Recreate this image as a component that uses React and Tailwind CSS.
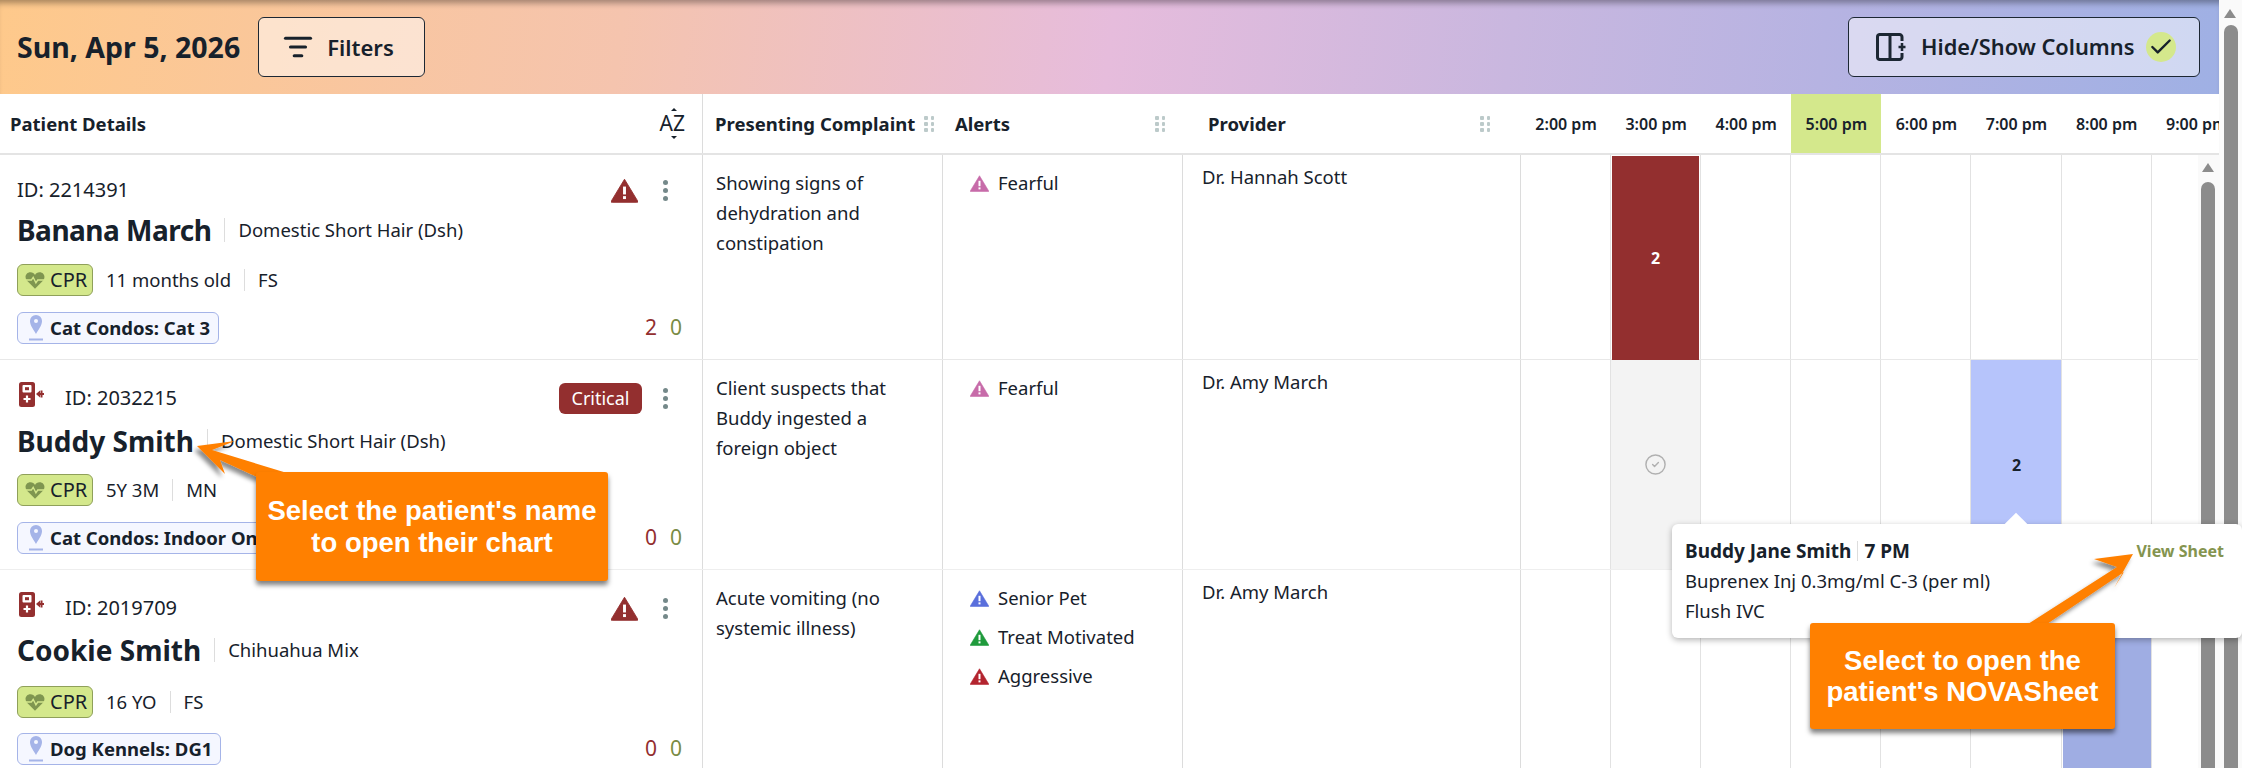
import React from 'react';
import { ListFilter, Check, CircleCheck } from 'lucide-react';

const times = ['2:00 pm', '3:00 pm', '4:00 pm', '5:00 pm', '6:00 pm', '7:00 pm', '8:00 pm', '9:00 pm'];

const patients = [
    {
        id: '2214391',
        name: 'Banana March',
        breed: 'Domestic Short Hair (Dsh)',
        age: '11 months old',
        sex: 'FS',
        location: 'Cat Condos: Cat 3',
        red: 2,
        complaint: ['Showing signs of', 'dehydration and', 'constipation'],
        alerts: [{ label: 'Fearful', color: '#c76ba9' }],
        provider: 'Dr. Hannah Scott',
        rowClass: 'h-[205px] border-b border-[#e8e8e8]',
        detailClass: 'pt-[19px]',
        nameClass: 'mt-[4px]',
        nameText: 'tracking-[-0.5px]',
        cprClass: 'mt-[14px]',
        locClass: 'mt-[16px]',
        slots: { 1: 'red' },
    },
    {
        id: '2032215',
        name: 'Buddy Smith',
        breed: 'Domestic Short Hair (Dsh)',
        age: '5Y 3M',
        sex: 'MN',
        location: 'Cat Condos: Indoor Only',
        red: 0,
        device: true,
        critical: true,
        complaint: ['Client suspects that', 'Buddy ingested a', 'foreign object'],
        alerts: [{ label: 'Fearful', color: '#c76ba9' }],
        provider: 'Dr. Amy March',
        rowClass: 'h-[210px] border-b border-[#eeeeee]',
        detailClass: 'pt-[22px]',
        nameClass: 'mt-[7px]',
        nameText: '',
        cprClass: 'mt-[13px]',
        locClass: 'mt-[16px]',
        slots: { 1: 'done', 5: 'blue' },
    },
    {
        id: '2019709',
        name: 'Cookie Smith',
        breed: 'Chihuahua Mix',
        age: '16 YO',
        sex: 'FS',
        location: 'Dog Kennels: DG1',
        red: 0,
        device: true,
        complaint: ['Acute vomiting (no', 'systemic illness)'],
        alerts: [
            { label: 'Senior Pet', color: '#5a6fdc' },
            { label: 'Treat Motivated', color: '#1f9a3c' },
            { label: 'Aggressive', color: '#b3242f' },
        ],
        provider: 'Dr. Amy March',
        rowClass: 'h-[198px]',
        detailClass: 'pt-[22px]',
        nameClass: 'mt-[6px]',
        nameText: '',
        cprClass: 'mt-[16px]',
        locClass: 'mt-[15px]',
        slots: { 6: 'periwinkle' },
    },
];

const Triangle = ({ color, className }) => (
    <svg viewBox="0 0 24 22" className={className}>
        <path d="M12 1 23.500 20a.8.8 0 0 1-.7 1.500H1.200A.8.8 0 0 1 .5 20Z" fill={color} stroke={color} strokeWidth="0.8" strokeLinejoin="round" />
        <rect x="10.700" y="7.500" width="2.600" height="7" fill="#fff" />
        <rect x="10.700" y="16" width="2.600" height="2.600" fill="#fff" />
    </svg>
);

const Kebab = () => (
    <div className="flex flex-col gap-[3px] w-[5px]">
        <span className="w-[5px] h-[5px] rounded-full bg-[#75898a]" />
        <span className="w-[5px] h-[5px] rounded-full bg-[#75898a]" />
        <span className="w-[5px] h-[5px] rounded-full bg-[#75898a]" />
    </div>
);

const DragHandle = ({ className }) => (
    <div className={`grid grid-cols-2 gap-x-[3px] gap-y-[2px] w-[10px] ${className}`}>
        {[0, 1, 2, 3, 4, 5].map((i) => (
            <span key={i} className="w-[3.5px] h-[4px] rounded-[1px] bg-[#bccaca]" />
        ))}
    </div>
);

const DeviceIcon = () => (
    <svg viewBox="0 0 25 25" className="w-[25px] h-[25px]">
        <rect x="0" y="0" width="16" height="25" rx="2.500" fill="#932f2f" />
        <rect x="3.500" y="3" width="9" height="7.500" rx="1" fill="#fff" />
        <rect x="6" y="5.200" width="4" height="3" fill="#932f2f" />
        <path d="M8 13.500v7M4.500 17h7" stroke="#fff" strokeWidth="2.200" />
        <path d="M20 12h5M22.500 8.500v7" stroke="#932f2f" strokeWidth="2" />
        <path d="M17 12 21 8.500v7Z" fill="#932f2f" />
    </svg>
);

const HeartIcon = () => (
    <svg viewBox="0 0 22 20" className="w-[20px] h-[19px] shrink-0">
        <path d="M11 19 2 10C-1 6.500 1 1 6 1c2.300 0 4 1.200 5 3 1-1.800 2.700-3 5-3 5 0 7 5.500 4 9Z" fill="#7f9650" />
        <path d="M1 9.500h6l2-3 3 6 2-3h7" fill="none" stroke="#d4e88c" strokeWidth="1.500" />
    </svg>
);

const PinIcon = () => (
    <svg viewBox="0 0 14 26" className="w-[14px] h-[26px] shrink-0">
        <path d="M7 0a6 6 0 0 1 6 6.300C13 10.500 9 15.500 7 19c-2-3.500-6-8.500-6-12.700A6 6 0 0 1 7 0Z" fill="#a5b4e8" />
        <circle cx="7" cy="6" r="2" fill="#f5f7ff" />
        <rect x="0" y="23.500" width="14" height="2" fill="#a5b4e8" />
    </svg>
);

const ColumnsIcon = () => (
    <svg viewBox="0 0 30 28" className="w-[30px] h-[28px]" fill="none" stroke="#1c2733" strokeWidth="3">
        <path d="M26 8V4a2.500 2.500 0 0 0-2.500-2.500h-20A2.500 2.500 0 0 0 1.500 4v20A2.500 2.500 0 0 0 3.500 26.500h20a2.500 2.500 0 0 0 2.500-2.500v-4" />
        <path d="M14 1.500v25" />
        <path d="M26 10v8M22.500 14h7" strokeWidth="2.500" />
    </svg>
);

const Divider = ({ className }) => <span className={`w-px bg-[#dddddd] ${className}`} />;

const PatientCell = ({ p }) => (
    <div className={`relative border-r border-[#dcdcdc] pl-[17px] pr-[19px] ${p.detailClass}`}>
        <div className="h-[32px] flex items-center justify-between">
            <div className="flex items-center">
                {p.device && <div className="ml-[2px] mr-[21px] -mt-[8px]"><DeviceIcon /></div>}
                <span className="text-[20px]">ID: {p.id}</span>
            </div>
            <div className="flex items-center mr-[15px]">
                {p.critical ? (
                    <span className="w-[83px] h-[31px] mr-[21px] rounded-[6px] bg-[#932f2f] text-white text-[18px] flex items-center justify-center">Critical</span>
                ) : (
                    <Triangle color="#932f2f" className="w-[27px] h-[25px] mr-[25px]" />
                )}
                <Kebab />
            </div>
        </div>
        <div className={`h-[40px] flex items-center ${p.nameClass}`}>
            <span className={`text-[28px] font-bold leading-none ${p.nameText}`}>{p.name}</span>
            <Divider className="h-[24px] ml-[13px] mr-[13px]" />
            <span className="text-[18.500px]">{p.breed}</span>
        </div>
        <div className={`flex items-center h-[32px] ${p.cprClass}`}>
            <span className="h-[32px] w-[76px] rounded-[6px] border border-[#8fa05a] bg-[#d4e88c] flex items-center pl-[7px] gap-[5px] text-[20px]">
                <HeartIcon />CPR
            </span>
            <span className="text-[18.500px] ml-[13px]">{p.age}</span>
            <Divider className="h-[22px] ml-[13px] mr-[13px]" />
            <span className="text-[18.500px]">{p.sex}</span>
        </div>
        <div className={`flex items-center justify-between h-[32px] ${p.locClass}`}>
            <span className="h-[32px] rounded-[6px] border border-[#a5b4e8] bg-[#f5f7ff] flex items-center gap-[7px] pl-[11px] pr-[8px] text-[18.500px] font-bold">
                <PinIcon />{p.location}
            </span>
            <span className="flex gap-[13px] text-[21px] mr-[1px]">
                <span className="text-[#932f2f]">{p.red}</span>
                <span className="text-[#7a8c45]">0</span>
            </span>
        </div>
    </div>
);

const Slot = ({ kind }) => {
    if (kind === 'red') {
        return (
            <div className="h-full flex items-center justify-center text-white font-bold text-[16px] bg-[#932f2f] mx-[1px] my-px">2</div>
        );
    }
    if (kind === 'done') {
        return (
            <div className="h-full flex items-center justify-center bg-[#f3f3f3]">
                <CircleCheck className="w-[23px] h-[23px] text-[#b0b0b0]" strokeWidth={1.500} />
            </div>
        );
    }
    if (kind === 'blue') {
        return <div className="h-full flex items-center justify-center font-bold text-[16px] bg-[#b6c4fb] pl-[1px]">2</div>;
    }
    if (kind === 'periwinkle') {
        return <div className="h-full bg-[#9fade3] ml-[1px]" />;
    }
    return null;
};

const App = () => {
    return (
        <div className="w-[2242px] h-[768px] overflow-hidden relative flex bg-white text-[#17212b] font-['Noto_Sans',sans-serif]">
            <div className="w-[2219px] h-full overflow-hidden shrink-0">
                <header className="h-[94px] px-[17px] flex items-center justify-between bg-[linear-gradient(97deg,#fec98b_0%,#f5c4ae_28%,#e6bcdc_50%,#c9b7df_68%,#b6b3e2_82%,#9fb0e4_100%)] shadow-[inset_0_7px_6px_-4px_rgba(0,0,0,0.35)]">
                    <div className="flex items-center">
                        <span className="text-[28.500px] font-bold w-[241px] whitespace-nowrap">Sun, Apr 5, 2026</span>
                        <button className="w-[167px] h-[60px] rounded-[6px] border border-[#1c2733] bg-white/50 flex items-center justify-center gap-[14px] pr-[6px] text-[22px] font-semibold">
                            <ListFilter className="w-[30px] h-[30px]" strokeWidth={2.500} />
                            Filters
                        </button>
                    </div>
                    <button className="w-[352px] h-[60px] mr-[2px] rounded-[6px] border border-[#1c2733] bg-white/50 flex items-center pl-[27px] text-[21.800px] font-semibold whitespace-nowrap">
                        <ColumnsIcon />
                        <span className="ml-[15px]">Hide/Show Columns</span>
                        <span className="ml-[12px] w-[30px] h-[30px] rounded-full bg-[#d4e88c] flex items-center justify-center shrink-0">
                            <Check className="w-[26px] h-[26px]" strokeWidth={2.200} />
                        </span>
                    </button>
                </header>

                <div className="grid grid-cols-[703px_240px_240px_338px_repeat(8,90.100px)] h-[61px] border-b-2 border-[#e4e4e4] font-bold">
                    <div className="border-r border-[#dcdcdc] pl-[10px] pr-[17px] flex items-center justify-between text-[18.500px]">
                        Patient Details
                        <span className="relative text-[21px] font-normal leading-none">
                            AZ
                            <span className="absolute left-[11px] -top-[5px] w-0 h-0 border-x-[3px] border-x-transparent border-b-[3px] border-b-[#17212b]" />
                            <span className="absolute left-[11px] -bottom-[5px] w-0 h-0 border-x-[3px] border-x-transparent border-t-[3px] border-t-[#17212b]" />
                        </span>
                    </div>
                    <div className="flex items-center pl-[12px] relative text-[18.500px]">
                        <span className="whitespace-nowrap">Presenting Complaint</span>
                        <DragHandle className="absolute left-[221px]" />
                    </div>
                    <div className="flex items-center pl-[12px] relative text-[18.500px]">
                        Alerts
                        <DragHandle className="absolute left-[212px]" />
                    </div>
                    <div className="flex items-center pl-[25px] relative text-[18.500px]">
                        Provider
                        <DragHandle className="absolute left-[297px]" />
                    </div>
                    {times.map((t) => (
                        <div key={t} className={`flex items-center justify-center text-[16px] font-semibold whitespace-nowrap ${t === '5:00 pm' ? 'bg-[#d4e88c]' : ''}`}>{t}</div>
                    ))}
                </div>

                {patients.map((p) => (
                    <div key={p.id} className={`grid grid-cols-[703px_240px_240px_338px_repeat(8,90.100px)] ${p.rowClass}`}>
                        <PatientCell p={p} />
                        <div className="border-r border-[#dcdcdc] pl-[13px] pt-[13px] text-[18.500px] leading-[30px]">
                            {p.complaint.map((line) => <div key={line}>{line}</div>)}
                        </div>
                        <div className="border-r border-[#dcdcdc] pl-[27px] pt-[13px] flex flex-col gap-[9px] text-[18.500px] leading-[30px]">
                            {p.alerts.map((a) => (
                                <div key={a.label} className="flex items-center gap-[9px]">
                                    <Triangle color={a.color} className="w-[19px] h-[17px]" />
                                    {a.label}
                                </div>
                            ))}
                        </div>
                        <div className="border-r border-[#dcdcdc] pl-[19px] pt-[7px] text-[18.500px] leading-[30px]">{p.provider}</div>
                        {times.map((t, i) => (
                            <div key={t} className="border-r border-[#e2e2e2] min-w-0">
                                <Slot kind={p.slots[i]} />
                            </div>
                        ))}
                    </div>
                ))}
            </div>

            {/* page scrollbar */}
            <div className="w-[23px] h-full bg-[#fafafa] relative">
                <span className="absolute left-[5px] top-[9px] w-0 h-0 border-x-[6px] border-x-transparent border-b-[9px] border-b-[#8c8c8c]" />
                <span className="absolute left-[5px] top-[25px] w-[14px] h-[743px] rounded-t-[7px] bg-[#8c8c8c]" />
            </div>

            {/* table scrollbar */}
            <div className="absolute left-[2198px] top-[155px] w-[21px] h-[613px] bg-[#fafafa]">
                <span className="absolute left-[4px] top-[8px] w-0 h-0 border-x-[6px] border-x-transparent border-b-[9px] border-b-[#8c8c8c]" />
                <span className="absolute left-[3px] top-[27px] w-[14px] h-[586px] rounded-t-[7px] bg-[#8c8c8c]" />
            </div>

            {/* schedule tooltip */}
            <div className="absolute left-[1672px] top-[524px] w-[570px] h-[114px] rounded-[6px] bg-white shadow-[0_2px_6px_rgba(0,0,0,0.3)] pl-[13px] pr-[18px] pt-[12px] text-[18.500px] leading-[30px]">
                <span className="absolute left-[336px] -top-[8px] w-[16px] h-[16px] rotate-45 bg-white" />
                <div className="flex items-center justify-between">
                    <div className="flex items-center font-bold text-[19px]">
                        Buddy Jane Smith
                        <Divider className="h-[20px] mx-[6px]" />
                        7 PM
                    </div>
                    <span className="font-bold text-[16px] text-[#84944f]">View Sheet</span>
                </div>
                <div>Buprenex Inj 0.3mg/ml C-3 (per ml)</div>
                <div>Flush IVC</div>
            </div>

            {/* training callouts */}
            <svg className="absolute inset-0 w-[2242px] h-[768px] pointer-events-none" viewBox="0 0 2242 768">
                <defs>
                    <filter id="arrowShadow" x="-20%" y="-20%" width="140%" height="140%">
                        <feDropShadow dx="-3" dy="4" stdDeviation="2" floodColor="#000" floodOpacity="0.45" />
                    </filter>
                </defs>
                <polygon points="197,446 235,441 212,450 287,473 257,477 220,460 225,474" fill="#ff8000" filter="url(#arrowShadow)" />
                <polygon points="2133,554 2094,559 2117,567 2028,624 2047,624 2124,572 2114,588" fill="#ff8000" filter="url(#arrowShadow)" />
            </svg>
            <div className="absolute left-[256px] top-[472px] w-[352px] h-[109px] rounded-[3px] bg-[#ff8000] shadow-[0_4px_5px_rgba(0,0,0,0.5)] flex items-center justify-center text-center text-white font-['Liberation_Sans',sans-serif] font-bold text-[27.500px] leading-[32px]">
                Select the patient's name<br />to open their chart
            </div>
            <div className="absolute left-[1810px] top-[623px] w-[305px] h-[106px] rounded-[3px] bg-[#ff8000] shadow-[0_4px_5px_rgba(0,0,0,0.5)] flex items-center justify-center text-center text-white font-['Liberation_Sans',sans-serif] font-bold text-[27.500px] leading-[31px]">
                Select to open the<br />patient's NOVASheet
            </div>
        </div>
    );
};

export default App;
